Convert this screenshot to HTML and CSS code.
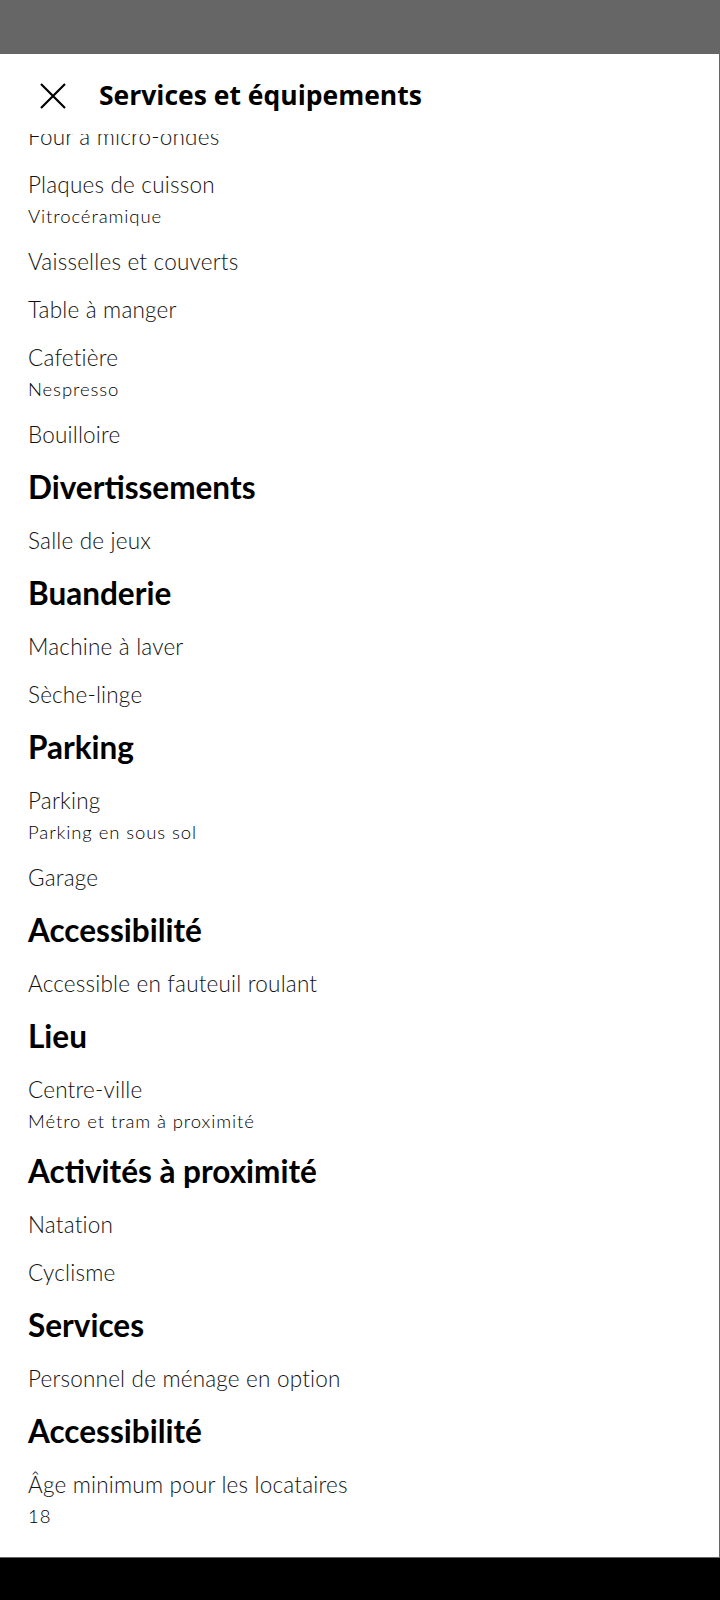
FILE: index.html
```html
<!DOCTYPE html>
<html lang="fr">
<head>
<meta charset="utf-8">
<title>Services et équipements</title>
<link rel="stylesheet" href="styles.css">
</head>
<body>
<div class="screen">
  <div class="status"></div>
  <div class="sheet">
    <header class="sheet-header">
      <button class="close" aria-label="Fermer">
        <svg width="26" height="26" viewBox="0 0 26 26"><path d="M1 1 L25 25 M25 1 L1 25" stroke="#000" stroke-width="2.2" fill="none"/></svg>
      </button>
      <h1 class="sheet-title">Services et équipements</h1>
    </header>
    <div class="scroll">
      <div class="list">
        <div class="item"><div class="name">Four à micro-ondes</div></div>
        <div class="item"><div class="name">Plaques de cuisson</div><div class="sub">Vitrocéramique</div></div>
        <div class="item"><div class="name">Vaisselles et couverts</div></div>
        <div class="item"><div class="name">Table à manger</div></div>
        <div class="item"><div class="name">Cafetière</div><div class="sub">Nespresso</div></div>
        <div class="item"><div class="name">Bouilloire</div></div>

        <h2 class="group">Divertissements</h2>
        <div class="item"><div class="name">Salle de jeux</div></div>

        <h2 class="group">Buanderie</h2>
        <div class="item"><div class="name">Machine à laver</div></div>
        <div class="item"><div class="name">Sèche-linge</div></div>

        <h2 class="group">Parking</h2>
        <div class="item"><div class="name">Parking</div><div class="sub">Parking en sous sol</div></div>
        <div class="item"><div class="name">Garage</div></div>

        <h2 class="group">Accessibilité</h2>
        <div class="item"><div class="name">Accessible en fauteuil roulant</div></div>

        <h2 class="group">Lieu</h2>
        <div class="item"><div class="name">Centre-ville</div><div class="sub">Métro et tram à proximité</div></div>

        <h2 class="group">Activités à proximité</h2>
        <div class="item"><div class="name">Natation</div></div>
        <div class="item"><div class="name">Cyclisme</div></div>

        <h2 class="group">Services</h2>
        <div class="item"><div class="name">Personnel de ménage en option</div></div>

        <h2 class="group">Accessibilité</h2>
        <div class="item"><div class="name">Âge minimum pour les locataires</div><div class="sub">18</div></div>
      </div>
    </div>
  </div>
  <div class="navbar"></div>
</div>
</body>
</html>
```

FILE: styles.css
```css
* { box-sizing: border-box; }
html, body { margin: 0; padding: 0; }
body {
  width: 720px;
  height: 1600px;
  overflow: hidden;
  background: #666666;
  font-family: "Lato", "Liberation Sans", sans-serif;
  color: #111;
}
.screen {
  width: 720px;
  height: 1600px;
  display: flex;
  flex-direction: column;
}
.status {
  height: 54px;
  flex: none;
  background: #666666;
}
.sheet {
  width: 719px;
  height: 1503px;
  flex: none;
  background: #fff;
  display: flex;
  flex-direction: column;
}
.sheet-header {
  height: 80px;
  flex: none;
  display: flex;
  align-items: center;
  padding-left: 40px;
  gap: 33px;
  background: #fff;
  position: relative;
  z-index: 1;
}
.close {
  border: 0;
  background: none;
  padding: 0;
  width: 26px;
  height: 26px;
  display: flex;
  margin-top: 4px;
}
.sheet-title {
  margin: 0;
  font-family: "Open Sans", "Lato", sans-serif;
  font-size: 26.5px;
  font-weight: 700;
  line-height: 32px;
  letter-spacing: 0;
  color: #000;
  margin-top: 2px;
}
.scroll {
  flex: 1;
  overflow: hidden;
}
.list {
  margin-top: -21px;
  padding: 0 0 0 28px;
}
.item {
  padding: 10px 0;
}
.name {
  font-size: 22.5px;
  font-weight: 300;
  line-height: 28px;
  letter-spacing: 0.2px;
  color: #111;
}
.sub {
  font-size: 18.5px;
  font-weight: 300;
  line-height: 24px;
  letter-spacing: 0.9px;
  margin-top: 5px;
  color: #000;
}
.group {
  margin: 0;
  padding: 10px 0 12px;
  font-size: 31.5px;
  line-height: 36px;
  font-weight: 700;
  color: #000;
}
.navbar {
  flex: 1;
  background: #000;
  margin-top: 1px;
}
```
